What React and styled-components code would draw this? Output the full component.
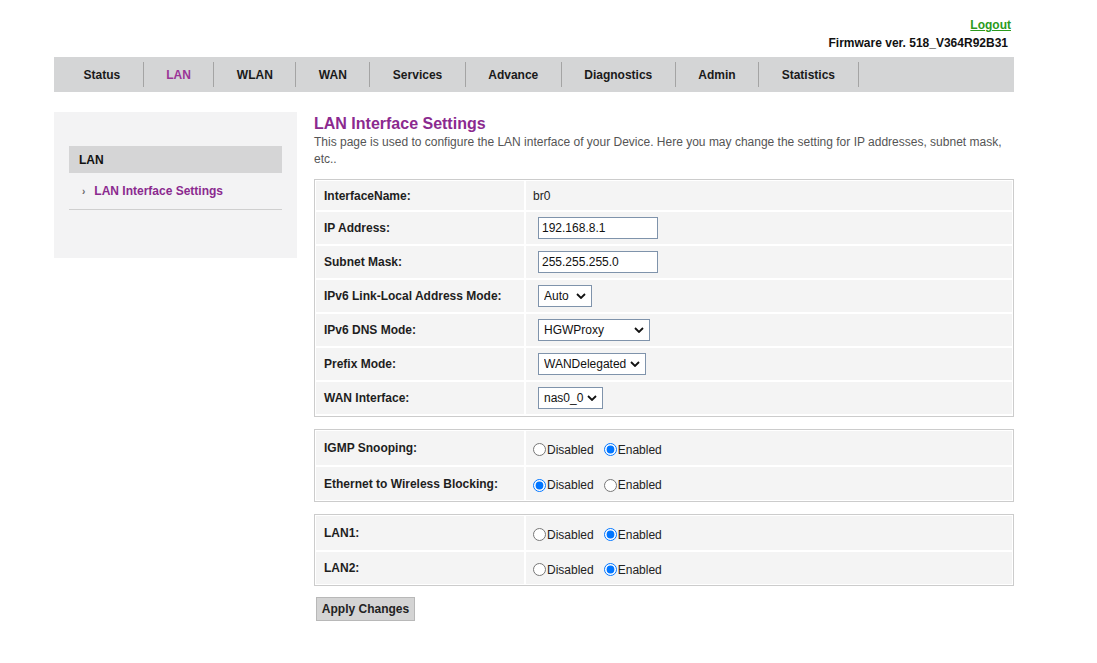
import styled, { createGlobalStyle } from 'styled-components';

const GlobalStyle = createGlobalStyle`
  body {
    margin: 0;
    background: #ffffff;
    font-family: "Liberation Sans", Arial, sans-serif;
    font-size: 12px;
    color: #222;
  }
`;

const chevron =
  "url(\"data:image/svg+xml,%3Csvg xmlns='http://www.w3.org/2000/svg' width='10' height='6' viewBox='0 0 10 6'%3E%3Cpath d='M1 1l4 4 4-4' fill='none' stroke='%23111' stroke-width='1.8'/%3E%3C/svg%3E\")";

const Page = styled.div`
  width: 960px;
  margin-left: 54px;
  padding-top: 17px;
`;

const TopBar = styled.div`
  display: flex;
  flex-direction: column;
  align-items: flex-end;
  line-height: 16px;
  font-weight: bold;
`;

const Logout = styled.a`
  color: #2a9a1c;
  text-decoration: underline;
  padding-right: 3px;
  cursor: pointer;
`;

const Firmware = styled.div`
  color: #111;
  padding-right: 6px;
  margin-top: 2px;
`;

const Nav = styled.div`
  display: flex;
  align-items: center;
  height: 35px;
  margin-top: 6px;
  padding-left: 7px;
  background: #d4d5d6;
`;

const Tab = styled.div`
  height: 25px;
  line-height: 27px;
  padding: 0 22.5px;
  border-right: 1px solid #a4a4a4;
  font-weight: bold;
  color: ${(p) => (p.$active ? '#9a3496' : '#1a1a1a')};
  cursor: pointer;
`;

const Body = styled.div`
  display: flex;
  align-items: flex-start;
  gap: 17px;
  margin-top: 20px;
`;

const Sidebar = styled.div`
  width: 243px;
  box-sizing: border-box;
  padding: 34px 15px 48px;
  background: #f3f3f4;
`;

const SideHead = styled.div`
  height: 27px;
  line-height: 28px;
  padding-left: 10px;
  background: #d5d5d6;
  font-weight: bold;
  color: #111;
`;

const SideItem = styled.div`
  display: flex;
  align-items: center;
  height: 36px;
  padding-left: 13px;
  border-bottom: 1px solid #cfcfcf;
  font-weight: bold;
  color: #8b2a8f;
`;

const Bullet = styled.span`
  color: #666;
  font-size: 10px;
  margin-right: 9px;
`;

const Main = styled.div`
  width: 700px;
`;

const Title = styled.h1`
  margin: 2px 0 0;
  font-size: 16px;
  line-height: 19px;
  color: #8b2a8f;
`;

const Desc = styled.p`
  margin: 1px 0 0;
  line-height: 17px;
  color: #555;
`;

const Panel = styled.div`
  display: grid;
  grid-template-columns: 208px 1fr;
  gap: 2px;
  padding: 1px 1px ${(p) => p.$bottom || 1}px;
  border: 1px solid #cccccc;
  margin-top: ${(p) => p.$top || 12}px;
`;

const Label = styled.div`
  display: flex;
  align-items: center;
  height: ${(p) => p.$h || 32}px;
  padding-left: 8px;
  background: #f4f4f4;
  font-weight: bold;
  color: #1e1e1e;
`;

const Value = styled.div`
  display: flex;
  align-items: center;
  height: ${(p) => p.$h || 32}px;
  padding-left: 7px;
  background: #f4f4f4;
  color: #222;
`;

const TextInput = styled.input`
  box-sizing: border-box;
  width: 120px;
  height: 22px;
  margin-left: 5px;
  padding: 1px 3px;
  border: 1px solid #7f93ab;
  font-family: "Liberation Sans", Arial, sans-serif;
  font-size: 12px;
  color: #111;
`;

const Select = styled.select`
  appearance: none;
  box-sizing: border-box;
  width: ${(p) => p.$w}px;
  height: 22px;
  margin-left: 5px;
  padding: 0 0 0 5px;
  border: 1px solid #7f93ab;
  border-radius: 0;
  background: #fff ${chevron} no-repeat right 5px center;
  font-family: "Liberation Sans", Arial, sans-serif;
  font-size: 12px;
  color: #111;
`;

const RadioLabel = styled.label`
  display: inline-flex;
  align-items: center;
  margin-right: 10px;
  margin-top: 3px;
`;

const Radio = styled.input`
  width: 13px;
  height: 13px;
  margin: 0 1px 0 0;
`;

const ApplyButton = styled.button`
  margin: 11px 0 0 2px;
  width: 99px;
  height: 24px;
  padding: 0;
  white-space: nowrap;
  border: 1px solid #b8b8b8;
  background: #d4d4d4;
  font-family: "Liberation Sans", Arial, sans-serif;
  font-size: 12px;
  font-weight: bold;
  color: #222;
  cursor: pointer;
`;

const tabs = ['Status', 'LAN', 'WLAN', 'WAN', 'Services', 'Advance', 'Diagnostics', 'Admin', 'Statistics'];

function RadioPair({ name, enabled }) {
  return (
    <>
      <RadioLabel>
        <Radio type="radio" name={name} defaultChecked={!enabled} />
        Disabled
      </RadioLabel>
      <RadioLabel>
        <Radio type="radio" name={name} defaultChecked={enabled} />
        Enabled
      </RadioLabel>
    </>
  );
}

function App() {
  return (
    <Page>
      <GlobalStyle />
      <TopBar>
        <Logout>Logout</Logout>
        <Firmware>Firmware ver. 518_V364R92B31</Firmware>
      </TopBar>
      <Nav>
        {tabs.map((t) => (
          <Tab key={t} $active={t === 'LAN'}>
            {t}
          </Tab>
        ))}
      </Nav>
      <Body>
        <Sidebar>
          <SideHead>LAN</SideHead>
          <SideItem>
            <Bullet>›</Bullet>LAN Interface Settings
          </SideItem>
        </Sidebar>
        <Main>
          <Title>LAN Interface Settings</Title>
          <Desc>
            This page is used to configure the LAN interface of your Device. Here you may change the setting for IP
            addresses, subnet mask, etc..
          </Desc>
          <Panel $top={11} $bottom={2}>
            <Label $h={29}>InterfaceName:</Label>
            <Value $h={29}>br0</Value>
            <Label>IP Address:</Label>
            <Value>
              <TextInput defaultValue="192.168.8.1" />
            </Value>
            <Label>Subnet Mask:</Label>
            <Value>
              <TextInput defaultValue="255.255.255.0" />
            </Value>
            <Label>IPv6 Link-Local Address Mode:</Label>
            <Value>
              <Select $w={54} defaultValue="Auto">
                <option>Auto</option>
                <option>Manual</option>
              </Select>
            </Value>
            <Label>IPv6 DNS Mode:</Label>
            <Value>
              <Select $w={112} defaultValue="HGWProxy">
                <option>HGWProxy</option>
                <option>Static</option>
                <option>WANConnection</option>
              </Select>
            </Value>
            <Label>Prefix Mode:</Label>
            <Value>
              <Select $w={108} defaultValue="WANDelegated">
                <option>WANDelegated</option>
                <option>Static</option>
              </Select>
            </Value>
            <Label>WAN Interface:</Label>
            <Value>
              <Select $w={65} defaultValue="nas0_0">
                <option>nas0_0</option>
              </Select>
            </Value>
          </Panel>
          <Panel>
            <Label $h={34}>IGMP Snooping:</Label>
            <Value $h={34}>
              <RadioPair name="igmp" enabled />
            </Value>
            <Label $h={33}>Ethernet to Wireless Blocking:</Label>
            <Value $h={33}>
              <RadioPair name="block" enabled={false} />
            </Value>
          </Panel>
          <Panel>
            <Label $h={34}>LAN1:</Label>
            <Value $h={34}>
              <RadioPair name="lan1" enabled />
            </Value>
            <Label $h={32}>LAN2:</Label>
            <Value $h={32}>
              <RadioPair name="lan2" enabled />
            </Value>
          </Panel>
          <ApplyButton>Apply Changes</ApplyButton>
        </Main>
      </Body>
    </Page>
  );
}

export default App;
